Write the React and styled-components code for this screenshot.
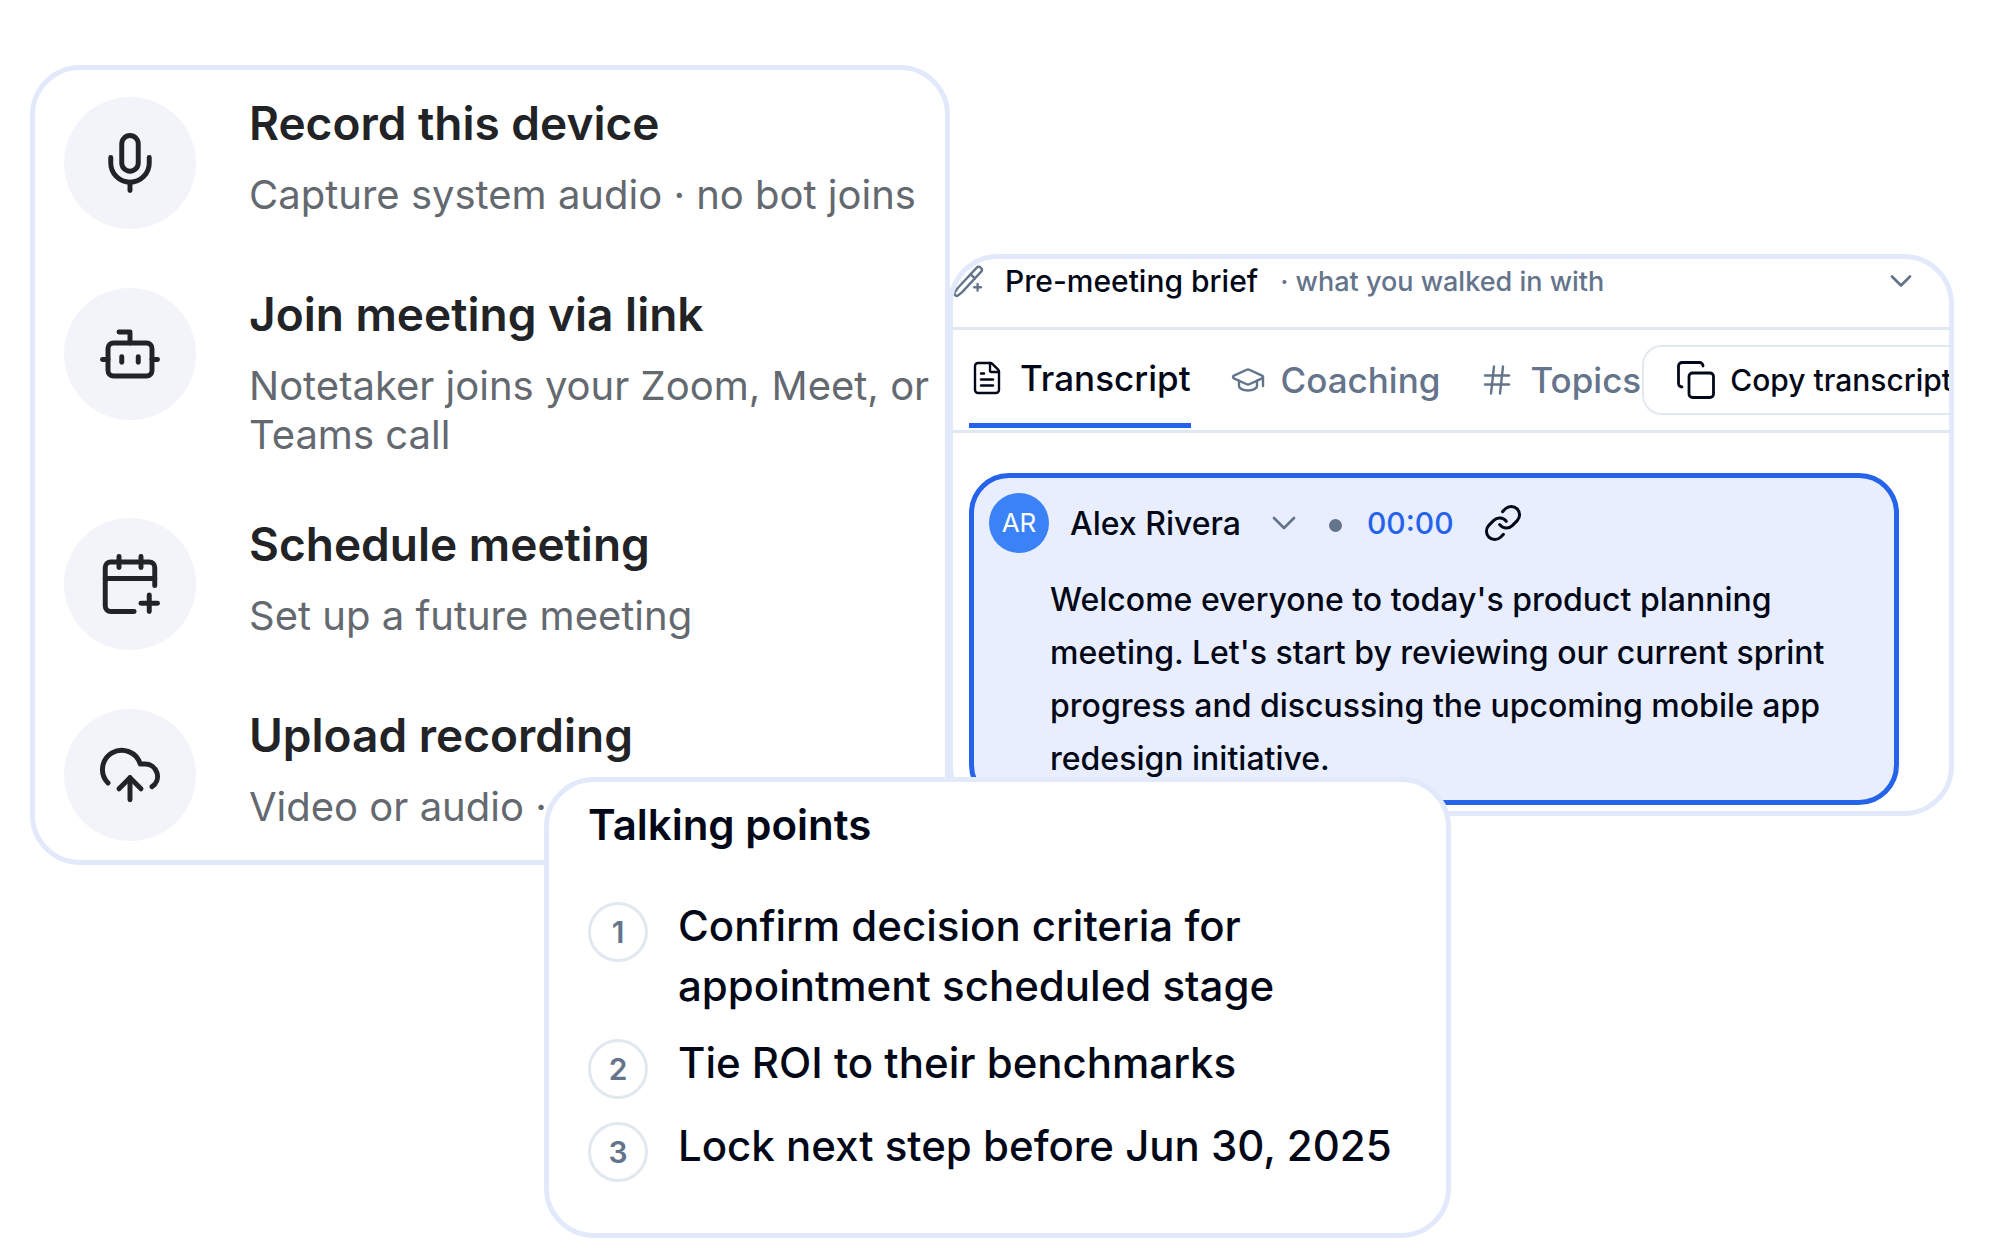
import React from 'react'
import styled, { createGlobalStyle } from 'styled-components'
import { Mic, Bot, CalendarPlus, CloudUpload, ChevronDown, FileText, GraduationCap, Hash, Copy, Link } from 'lucide-react'

const actions = [
  { icon: Mic, title: 'Record this device', text: 'Capture system audio · no bot joins' },
  { icon: Bot, title: 'Join meeting via link', text: 'Notetaker joins your Zoom, Meet, or Teams call' },
  { icon: CalendarPlus, title: 'Schedule meeting', text: 'Set up a future meeting' },
  { icon: CloudUpload, title: 'Upload recording', text: 'Video or audio ·' },
]

const tabs = [
  { icon: FileText, label: 'Transcript', active: true },
  { icon: GraduationCap, label: 'Coaching' },
  { icon: Hash, label: 'Topics' },
]

const points = [
  'Confirm decision criteria for appointment scheduled stage',
  'Tie ROI to their benchmarks',
  'Lock next step before Jun 30, 2025',
]

const PenSparkle = () => (
  <svg width="36" height="36" viewBox="0 0 24 24" fill="none" stroke="currentColor" strokeWidth="1.6" strokeLinecap="round" strokeLinejoin="round">
    <g transform="rotate(-47 10.25 12)">
      <path d="M-1 10.4 2 10h18.6a1.7 1.7 0 0 1 1.7 1.7v.6a1.7 1.7 0 0 1-1.7 1.7H2l-3-.4a1.6 1.6 0 0 1 0-3.2Z" />
      <path d="M14.5 10v4" />
    </g>
    <path d="M16.4 14v4.4" />
    <path d="M14.2 16.2h4.4" />
  </svg>
)

const App = () => (
  <Stage>
    <GlobalStyle />
    <TopRow>
      <ActionsCard>
        {actions.map(({ icon: Icon, title, text }) => (
          <Action key={title}>
            <ActionIcon><Icon size={66} strokeWidth={1.8} /></ActionIcon>
            <div>
              <ActionTitle>{title}</ActionTitle>
              <ActionText>{text}</ActionText>
            </div>
          </Action>
        ))}
      </ActionsCard>

      <TranscriptCard>
        <BriefBar>
          <PenSparkle />
          <BriefTitle>Pre-meeting brief</BriefTitle>
          <BriefNote>· what you walked in with</BriefNote>
          <PlainButton aria-label="Expand brief"><ChevronDown size={36} strokeWidth={1.8} /></PlainButton>
        </BriefBar>
        <TabBar>
          <Tabs>
            {tabs.map(({ icon: Icon, label, active }) => (
              <Tab key={label} $active={active}><Icon size={36} strokeWidth={1.6} />{label}</Tab>
            ))}
          </Tabs>
          <CopyButton><Copy size={42} strokeWidth={1.6} />Copy transcript</CopyButton>
        </TabBar>
        <Entry>
          <Speaker>
            <Avatar>AR</Avatar>
            <Name>Alex Rivera</Name>
            <PlainButton aria-label="Change speaker"><ChevronDown size={40} strokeWidth={1.6} /></PlainButton>
            <Dot />
            <Time href="#0">00:00</Time>
            <LinkButton aria-label="Copy link"><Link size={40} strokeWidth={1.8} /></LinkButton>
          </Speaker>
          <Speech>
            Welcome everyone to today's product planning meeting. Let's start by reviewing our current sprint progress and discussing the upcoming mobile app redesign initiative.
          </Speech>
        </Entry>
      </TranscriptCard>
    </TopRow>

    <PointsCard>
      <PointsTitle>Talking points</PointsTitle>
      <Points>
        {points.map((point, index) => (
          <Point key={point}>
            <Number>{index + 1}</Number>
            <PointText>{point}</PointText>
          </Point>
        ))}
      </Points>
    </PointsCard>
  </Stage>
)

export default App

const GlobalStyle = createGlobalStyle`
  * {
    box-sizing: border-box;
  }
  body {
    margin: 0;
    background: #fff;
    font-family: Inter, 'Liberation Sans', sans-serif;
    color: #020817;
  }
  svg {
    display: block;
    flex-shrink: 0;
  }
`

const Stage = styled.main`
  padding-top: 65px;
  overflow: hidden;
`

const TopRow = styled.div`
  display: grid;
  grid-template-columns: minmax(0, 920fr) minmax(0, 1004fr);
  align-items: start;
  padding-left: 30px;
  padding-right: 46px;
`

const Card = styled.section`
  border: 5px solid #e1e9fb;
  border-radius: 50px;
  background: #fff;
  overflow: hidden;
`

const ActionsCard = styled(Card)`
  display: flex;
  flex-direction: column;
  gap: 59px;
  padding: 27px 4px 19px 29px;
`

const Action = styled.div`
  display: flex;
  gap: 53px;
`

const ActionIcon = styled.div`
  display: flex;
  align-items: center;
  justify-content: center;
  flex-shrink: 0;
  width: 132px;
  height: 132px;
  border-radius: 50%;
  background: #f3f4f9;
  color: #222326;
`

const ActionTitle = styled.h3`
  margin: 0 0 21px;
  font-size: 46px;
  font-weight: 600;
  line-height: 52px;
  color: #222326;
`

const ActionText = styled.p`
  margin: 0;
  font-size: 40px;
  line-height: 49px;
  color: #646970;
`

const TranscriptCard = styled(Card)`
  margin-top: 189px;
  margin-left: -2px;
  padding-bottom: 6px;
`

const BriefBar = styled.div`
  display: flex;
  align-items: center;
  height: 71px;
  padding: 0 30px 24px 0;
  border-bottom: 3px solid #e2e8f0;
  color: #64748b;
`

const BriefTitle = styled.h3`
  margin: 0 22px 0 16px;
  font-size: 30px;
  font-weight: 500;
  color: #020817;
`

const BriefNote = styled.span`
  flex: 1;
  font-size: 27px;
  font-weight: 500;
`

const PlainButton = styled.button`
  padding: 0;
  border: 0;
  background: none;
  color: #64748b;
`

const TabBar = styled.div`
  display: flex;
  align-items: center;
  height: 103px;
  padding-left: 16px;
  border-bottom: 3px solid #e2e8f0;
`

const Tabs = styled.nav`
  display: flex;
  flex-shrink: 0;
  gap: 39px;
  height: 96px;
`

const Tab = styled.button`
  display: flex;
  align-items: center;
  flex-shrink: 0;
  gap: 15px;
  padding: 0;
  border: 0;
  border-bottom: ${props => props.$active ? '5px solid #2563eb' : '0'};
  background: none;
  font: 500 35px Inter, 'Liberation Sans', sans-serif;
  color: ${props => props.$active ? '#020817' : '#64748b'};
`

const CopyButton = styled.button`
  display: flex;
  align-items: center;
  flex-shrink: 0;
  gap: 13px;
  height: 70px;
  margin-left: 1px;
  padding: 0 31px;
  border: 2px solid #e2e8f0;
  border-radius: 20px;
  background: #fff;
  font: 500 30px Inter, 'Liberation Sans', sans-serif;
  color: #020817;
`

const Entry = styled.article`
  margin: 40px 50px 0 16px;
  padding: 15px;
  border: 5px solid #2563eb;
  border-radius: 40px;
  background: #e8eefd;
`

const Speaker = styled.div`
  display: flex;
  align-items: center;
  height: 60px;
`

const Avatar = styled.div`
  width: 60px;
  border-radius: 50%;
  background: #3b82f6;
  font-size: 26px;
  line-height: 60px;
  text-align: center;
  color: #fff;
`

const Name = styled.span`
  margin: 0 23px 0 21px;
  font-size: 32px;
  font-weight: 500;
`

const Dot = styled.span`
  width: 13px;
  height: 13px;
  margin: 4px 25px 0;
  border-radius: 50%;
  background: #64748b;
`

const Time = styled.a`
  margin-right: 29px;
  font-size: 30px;
  font-weight: 500;
  color: #2563eb;
  text-decoration: none;
`

const LinkButton = styled(PlainButton)`
  color: #020817;
`

const Speech = styled.p`
  margin: 20px 20px 0 61px;
  font-size: 32px;
  font-weight: 500;
  line-height: 53px;
`

const PointsCard = styled(Card)`
  position: relative;
  width: 45.35%;
  margin: -88px 0 0 27.2%;
  padding: 18px 39px 51px;
`

const PointsTitle = styled.h2`
  margin: 0;
  font-size: 42px;
  font-weight: 600;
  line-height: 50px;
`

const Points = styled.ol`
  display: flex;
  flex-direction: column;
  gap: 17px;
  margin: 46px 0 0;
  padding: 0;
  list-style: none;
`

const Point = styled.li`
  display: flex;
  align-items: flex-start;
  gap: 30px;
  min-height: 66px;
`

const Number = styled.span`
  flex-shrink: 0;
  width: 60px;
  height: 60px;
  margin-top: 6px;
  border: 3px solid #e2e8f0;
  border-radius: 50%;
  font-size: 30px;
  font-weight: 600;
  line-height: 54px;
  text-align: center;
  color: #64748b;
`

const PointText = styled.span`
  font-size: 42px;
  font-weight: 500;
  line-height: 60px;
`
